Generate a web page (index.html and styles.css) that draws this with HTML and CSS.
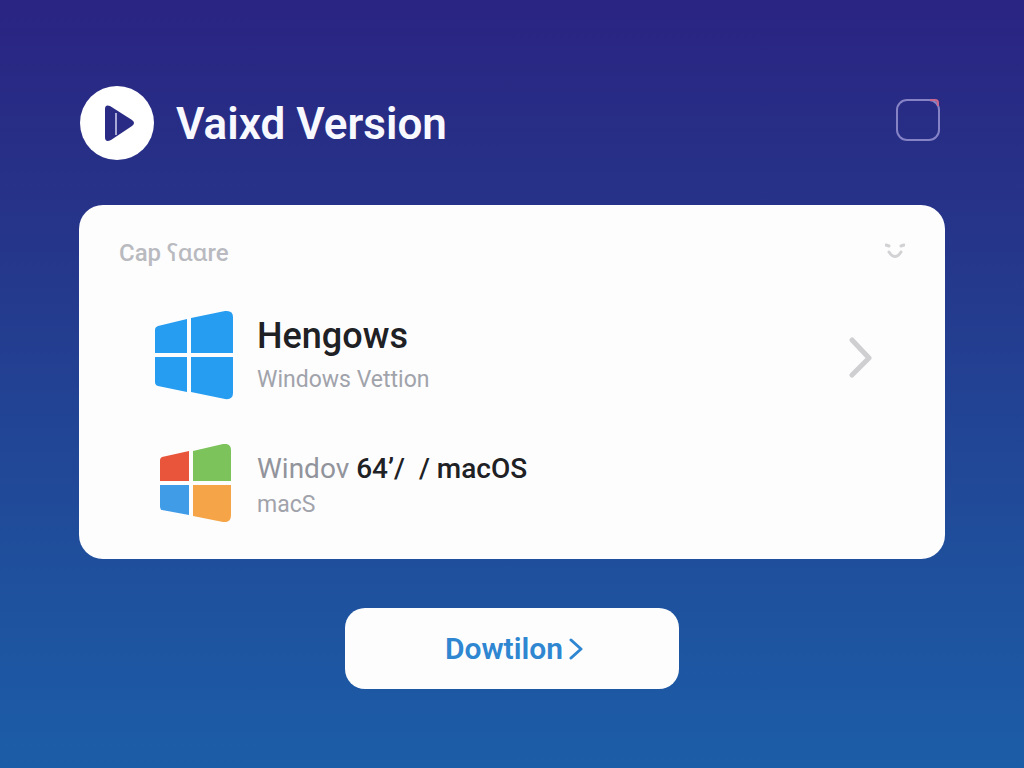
FILE: index.html
```html
<!DOCTYPE html>
<html lang="en">
<head>
    <meta charset="UTF-8">
    <meta name="viewport" content="width=device-width, initial-scale=1.0">
    <title>Vaixd Version</title>
    <link rel="stylesheet" href="styles.css">
</head>
<body>

<header class="page-header">
    <svg class="logo" viewBox="0 0 74 74" aria-hidden="true">
        <circle cx="37" cy="37" r="37" fill="#fff"/>
        <path d="M25 23q0-5 5-3l22 14q4 3 0 6L31 54q-6 3-6-3z" fill="#2a2b85"/>
        <path d="M36 27v22" stroke="#d5d4f0" stroke-width="1.5"/>
    </svg>
    <h1>Vaixd Version</h1>
    <label class="select-all">
        <input type="checkbox" aria-label="Select version">
    </label>
</header>

<main>
    <section class="card">
        <div class="card-header">
            <h2>Cap ʕɑɑre</h2>
            <button class="toggle" aria-label="Toggle list">
                <svg width="20" height="20" viewBox="0 0 20 20" fill="none" stroke="#d2d2d4" stroke-width="3" stroke-linecap="round">
                    <path d="M1 4l3 1M19 4l-3 1M4 11q6 9 12 0"/>
                </svg>
            </button>
        </div>

        <button class="version-row">
            <svg class="os-icon" width="79" height="90" viewBox="0 0 79 90" fill="#269df0" aria-hidden="true">
                <path d="M1 20q0-3 3-4l29-7v34H1z"/>
                <path d="M37 8L71 1q8-1 8 6v36H37z"/>
                <path d="M1 47h32v35L4 76q-3-1-3-4z"/>
                <path d="M37 47h42v36q0 7-8 6l-34-7z"/>
            </svg>
            <span class="version-text">
                <span class="name">Hengows</span>
                <span class="detail">Windows Vettion</span>
            </span>
            <svg class="chevron" width="24" height="46" viewBox="0 0 24 46" fill="none" stroke="#cfcfd2" stroke-width="5" stroke-linecap="round" stroke-linejoin="round">
                <path d="M3 8l17 18L3 43"/>
            </svg>
        </button>

        <button class="version-row">
            <svg class="os-icon" width="79" height="78" viewBox="0 0 79 78" aria-hidden="true">
                <path d="M6 16q0-2 2-3l27-6v30H6z" fill="#e8553a"/>
                <path d="M39 7l30-7q8-1 8 6v31H39z" fill="#7bc35a"/>
                <path d="M6 41h29v30L8 66q-2-1-2-3z" fill="#419ce8"/>
                <path d="M39 41h38v30q0 8-8 7l-30-6z" fill="#f5a447"/>
            </svg>
            <span class="version-text compact">
                <span class="platforms">Windov <b>64ʼ/&nbsp; / macOS</b></span>
                <span class="detail">macS</span>
            </span>
        </button>
    </section>

    <button class="download">
        Dowtilon
        <svg width="14" height="24" viewBox="0 0 14 24" fill="none" stroke="#2f86d1" stroke-width="3" stroke-linecap="round" stroke-linejoin="round">
            <path d="M2 3l10 9L2 21"/>
        </svg>
    </button>
</main>

</body>
</html>
```
FILE: styles.css
```css
* {
    box-sizing: border-box;
}
body {
    font-family: Roboto, "Noto Sans", sans-serif;
    margin: 0;
    min-height: 100vh;
    padding: 86px 79px 48px;
    background: linear-gradient(#2a2482, #263388 27%, #1f4f9c 73%, #1c5da8);
}
h1, h2 {
    margin: 0;
}
button {
    font-family: inherit;
    border: none;
    background: none;
    padding: 0;
    cursor: pointer;
}
svg {
    display: block;
    flex-shrink: 0;
}
.page-header {
    display: flex;
    align-items: center;
    gap: 22px;
    padding: 0 5px 0 1px;
    margin-bottom: 45px;
}
.logo {
    width: 74px;
    height: 74px;
}
.page-header h1 {
    flex: 1;
    color: #f8f8ff;
    font-size: 44px;
    font-weight: 600;
    line-height: 56px;
    padding-top: 2px;
}
.select-all {
    position: relative;
    display: flex;
    margin-bottom: 6px;
}
.select-all::after {
    content: "";
    position: absolute;
    top: 0;
    right: 1px;
    width: 7px;
    height: 5px;
    border-top: 2px solid #c9688f;
    border-right: 2px solid #c9688f;
    border-top-right-radius: 4px;
}
.select-all input {
    appearance: none;
    width: 44px;
    height: 42px;
    margin: 0;
    border: 2px solid #8582c6;
    border-radius: 11px;
}
.card {
    background: #fdfdfe;
    border-radius: 24px;
    padding: 30px 40px 37px;
}
.card-header {
    display: flex;
    justify-content: space-between;
    align-items: center;
    height: 32px;
    margin-bottom: 43px;
}
.card-header h2 {
    color: #b9babf;
    font-size: 24px;
    font-weight: 500;
}
.version-row {
    display: flex;
    align-items: center;
    width: 100%;
    gap: 24px;
    padding: 0 32px 0 35px;
    text-align: left;
}
.version-row + .version-row {
    margin-top: 44px;
}
.version-text {
    display: flex;
    flex-direction: column;
    flex: 1;
    gap: 8px;
    padding-bottom: 2px;
}
.version-text.compact {
    gap: 4px;
    padding: 4px 0 0;
}
.name {
    color: #202124;
    font-size: 36px;
    font-weight: 500;
    line-height: 44px;
}
.detail {
    color: #a1a3ab;
    font-size: 23px;
    line-height: 28px;
}
.platforms {
    color: #92949c;
    font-size: 28px;
    line-height: 36px;
}
.platforms b {
    color: #202124;
    font-weight: 500;
}
.download {
    display: flex;
    align-items: center;
    justify-content: center;
    gap: 6px;
    width: 334px;
    max-width: 100%;
    height: 81px;
    margin: 49px auto 0;
    padding-left: 4px;
    border-radius: 20px;
    background: #fdfdfe;
    color: #2f86d1;
    font-size: 30px;
    font-weight: 600;
}
```
